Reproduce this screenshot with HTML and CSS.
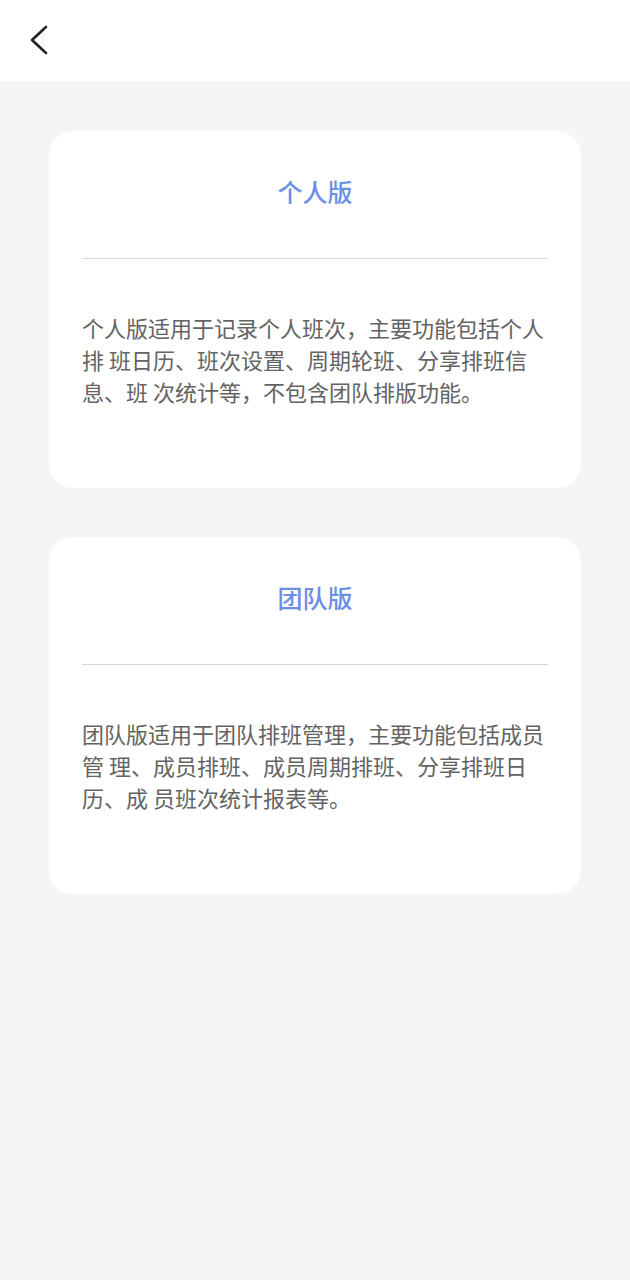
FILE: index.html
```html
<!DOCTYPE html>
<html lang="zh-CN">
<head>
    <meta charset="UTF-8">
    <meta name="viewport" content="width=device-width, initial-scale=1.0">
    <title>版本说明</title>
    <link rel="stylesheet" href="styles.css">
</head>
<body>
    <header class="top-bar">
        <button class="back-btn" type="button" aria-label="返回">
            <svg width="24" height="32" viewBox="0 0 24 32">
                <path d="M20 3 L6 16 L20 29" fill="none" stroke="#222" stroke-width="2.6" stroke-linecap="round" stroke-linejoin="round"/>
            </svg>
        </button>
    </header>
    <main class="page">
        <section class="card">
            <h2 class="card-title">个人版</h2>
            <div class="divider"></div>
            <p class="card-text">个人版适用于记录个人班次，主要功能包括个人排 班日历、班次设置、周期轮班、分享排班信息、班 次统计等，不包含团队排版功能。</p>
        </section>
        <section class="card">
            <h2 class="card-title">团队版</h2>
            <div class="divider"></div>
            <p class="card-text">团队版适用于团队排班管理，主要功能包括成员管 理、成员排班、成员周期排班、分享排班日历、成 员班次统计报表等。</p>
        </section>
    </main>
</body>
</html>
```

FILE: styles.css
```css
body {
    margin: 0;
    background-color: #f5f5f5;
    font-family: "Noto Sans CJK SC", "Noto Sans", sans-serif;
}

.top-bar {
    height: 81px;
    background-color: #fff;
    display: flex;
    align-items: center;
    padding-left: 26px;
}

.back-btn {
    background: none;
    border: none;
    padding: 0;
    margin-top: -2px;
    cursor: pointer;
}

.back-btn svg {
    display: block;
}

.page {
    padding: 50px 49px;
    display: flex;
    flex-direction: column;
    gap: 49px;
}

.card {
    background-color: #fff;
    border-radius: 24px;
    padding: 42px 33px 81px;
}

.card-title {
    margin: 0;
    text-align: center;
    font-size: 25px;
    line-height: 36px;
    font-weight: 500;
    color: #6b8fe4;
}

.divider {
    height: 1px;
    background-color: #d6d6d6;
    margin-top: 49px;
}

.card-text {
    margin: 52px 0 0;
    font-size: 22px;
    line-height: 32px;
    color: #636363;
}
```
